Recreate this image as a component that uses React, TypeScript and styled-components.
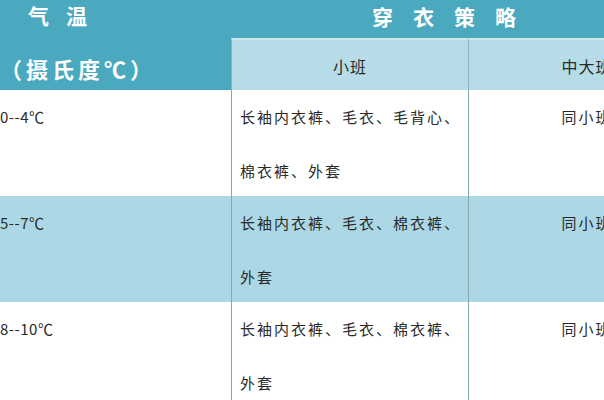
import styled, { createGlobalStyle } from "styled-components";

const GlobalStyle = createGlobalStyle`
  html, body {
    margin: 0;
    padding: 0;
    background: #ffffff;
    overflow: hidden;
  }
`;

type Tone = "teal" | "head" | "white" | "blue";

const tones: Record<Tone, string> = {
  teal: "#4ba9bf",
  head: "#b6dde7",
  white: "#ffffff",
  blue: "#acd8e5",
};

const rows = [
  { temp: "0--4℃", small: "长袖内衣裤、毛衣、毛背心、棉衣裤、外套", tone: "white" as Tone },
  { temp: "5--7℃", small: "长袖内衣裤、毛衣、棉衣裤、外套", tone: "blue" as Tone },
  { temp: "8--10℃", small: "长袖内衣裤、毛衣、棉衣裤、外套", tone: "white" as Tone },
];

const App = () => {
  return (
    <>
      <GlobalStyle />
      <Table>
        <TempHead>
          <HeadTitle>气温</HeadTitle>
          <HeadUnit>（摄氏度℃）</HeadUnit>
        </TempHead>
        <StrategyHead>穿衣策略</StrategyHead>
        <SubHead>小班</SubHead>
        <SubHead>中大班</SubHead>

        {rows.map((r) => (
          <Row key={r.temp} $tone={r.tone}>
            <TempCell>{r.temp}</TempCell>
            <TextCell>{r.small}</TextCell>
            <SameCell>同小班</SameCell>
          </Row>
        ))}
      </Table>
    </>
  );
};

export default App;

const Table = styled.div`
  display: grid;
  grid-template-columns: 231px 237px 237px;
  grid-template-rows: 38px 54px;
  grid-auto-rows: 106px;
  width: 705px;
  font-family: "Noto Sans CJK SC", "Noto Sans", sans-serif;
  color: #2a2a2a;
`;

const TempHead = styled.div`
  grid-row: 1 / span 2;
  background: ${tones.teal};
  border-bottom: 2px solid #5cb6c8;
  color: #ffffff;
  font-weight: 700;
`;

const HeadTitle = styled.div`
  font-size: 21px;
  letter-spacing: 17px;
  line-height: 30px;
  padding-left: 28px;
`;

const HeadUnit = styled.div`
  font-size: 22px;
  letter-spacing: 4px;
  line-height: 30px;
  margin-top: 23px;
`;

const StrategyHead = styled.div`
  grid-column: 2 / span 2;
  background: ${tones.teal};
  color: #ffffff;
  font-weight: 700;
  font-size: 21px;
  letter-spacing: 20px;
  line-height: 32px;
  padding-left: 141px;
`;

const SubHead = styled.div`
  background: ${tones.head};
  border-top: 2px solid #cbe8ef;
  border-left: 1px solid #8fb3bd;
  border-bottom: 2px solid #5cb6c8;
  display: flex;
  align-items: center;
  justify-content: center;
  font-size: 16px;
  letter-spacing: 1px;
  padding-top: 2px;
`;

const Row = styled.div<{ $tone: Tone }>`
  display: contents;

  > div {
    background: ${(p) => tones[p.$tone]};
    border-bottom: 2px solid #7fc6d3;
    font-size: 15px;
    letter-spacing: 2px;
    line-height: 54px;
  }
`;

const TempCell = styled.div`
  letter-spacing: 0.5px !important;
  margin-top: -2px;
`;

const TextCell = styled.div`
  border-left: 1px solid #86a6b0;
  padding-left: 8px;
  padding-right: 4px;
  margin-top: -2px;
`;

const SameCell = styled.div`
  border-left: 1px solid #86a6b0;
  text-align: center;
  margin-top: -2px;
`;
